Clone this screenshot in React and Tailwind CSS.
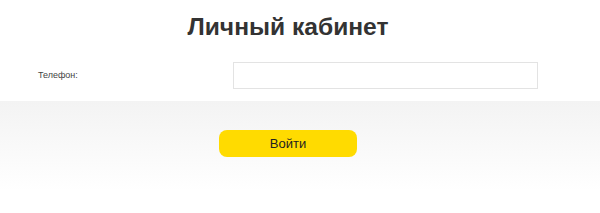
export default function App() {
  return (
    <div className="w-[600px] h-[213px] bg-white" style={{ fontFamily: '"Liberation Sans", Arial, sans-serif' }}>
      <div className="h-[101px] flex flex-col">
        <h1 className="pt-[12px] text-center text-[24.6px] leading-[30px] font-bold text-[#333333] mr-[24px]">Личный кабинет</h1>
        <div className="flex items-center mt-[20px]">
          <label className="pl-[38px] w-[233px] text-[9px] text-[#444444]">Телефон:</label>
          <input type="text" className="w-[305px] h-[27px] border border-[#e3e3e3] bg-white outline-none" />
        </div>
      </div>
      <div className="h-[90px] bg-gradient-to-b from-[#f3f3f3] to-[#ffffff] flex flex-col items-start pt-[29px]">
        <button className="ml-[219px] w-[138px] h-[27px] rounded-[8px] bg-[#ffdb00] text-[13px] text-[#222222]">Войти</button>
      </div>
    </div>
  );
}
